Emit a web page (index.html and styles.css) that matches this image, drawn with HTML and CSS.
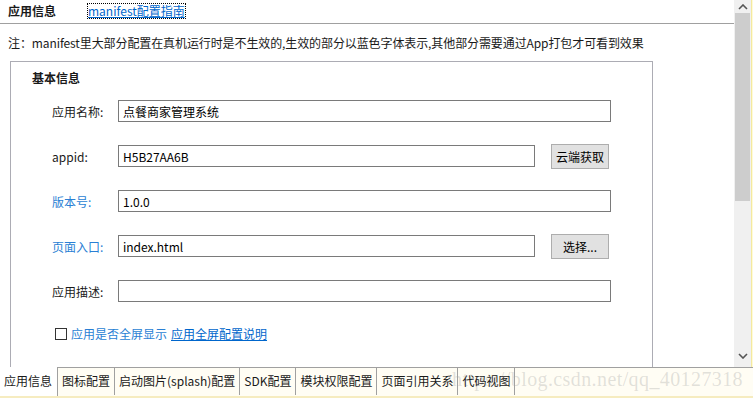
FILE: index.html
```html
<!DOCTYPE html>
<html lang="zh-CN">
<head>
  <meta charset="UTF-8" />
  <title>manifest.json</title>
  <link rel="stylesheet" href="styles.css">
</head>
<body>
  <div class="window">
    <div class="main">
      <div class="content">
        <header class="top">
          <span class="top-title">应用信息</span>
          <a class="guide" href="#">manifest配置指南</a>
        </header>

        <p class="note">注：manifest里大部分配置在真机运行时是不生效的,生效的部分以蓝色字体表示,其他部分需要通过App打包才可看到效果</p>

        <fieldset class="group">
          <div class="group-title">基本信息</div>

          <div class="row">
            <label class="label">应用名称:</label>
            <input class="field" type="text" value="点餐商家管理系统">
          </div>

          <div class="row">
            <label class="label">appid:</label>
            <input class="field short" type="text" value="H5B27AA6B">
            <button class="btn">云端获取</button>
          </div>

          <div class="row">
            <label class="label blue">版本号:</label>
            <input class="field" type="text" value="1.0.0">
          </div>

          <div class="row">
            <label class="label blue">页面入口:</label>
            <input class="field short" type="text" value="index.html">
            <button class="btn">选择...</button>
          </div>

          <div class="row">
            <label class="label">应用描述:</label>
            <input class="field" type="text" value="">
          </div>

          <div class="check-row">
            <span class="box"></span>
            <span class="blue">应用是否全屏显示</span>
            <a href="#" class="link">应用全屏配置说明</a>
          </div>
        </fieldset>
      </div>

      <div class="scrollbar">
        <div class="arrow up">
          <svg width="10" height="6" viewBox="0 0 10 6"><path d="M1 5 L5 1 L9 5" fill="none" stroke="#555" stroke-width="1.6"/></svg>
        </div>
        <div class="thumb"></div>
        <div class="track"></div>
        <div class="arrow down">
          <svg width="10" height="6" viewBox="0 0 10 6"><path d="M1 1 L5 5 L9 1" fill="none" stroke="#555" stroke-width="1.6"/></svg>
        </div>
      </div>
      <div class="edge"></div>
    </div>

    <div class="tabs">
      <span class="watermark">https://blog.csdn.net/qq_40127318</span>
      <span class="tab active">应用信息</span>
      <span class="tab">图标配置</span>
      <span class="tab">启动图片(splash)配置</span>
      <span class="tab">SDK配置</span>
      <span class="tab">模块权限配置</span>
      <span class="tab">页面引用关系</span>
      <span class="tab">代码视图</span>
    </div>
  </div>
</body>
</html>
```

FILE: styles.css
```css
* {
  box-sizing: border-box;
}

body {
  margin: 0;
  width: 753px;
  height: 398px;
  overflow: hidden;
  background: #ffffff;
  font-family: "Noto Sans CJK SC", "Noto Sans", sans-serif;
  font-size: 12px;
  color: #1a1a1a;
}

.window {
  display: flex;
  flex-direction: column;
  height: 398px;
}

.main {
  display: flex;
  height: 367px;
}

.content {
  width: 734px;
  overflow: hidden;
}

.top {
  display: flex;
  align-items: center;
  height: 24px;
  padding: 0 0 2px 8px;
  border-bottom: 1px solid #a0a0a0;
}

.top-title {
  font-weight: bold;
  width: 80px;
}

.guide {
  color: #0066cc;
  outline: 1px dotted #000;
  line-height: 14px;
}

.note {
  margin: 9px 0 0 8px;
  height: 20px;
  line-height: 20px;
  white-space: nowrap;
  letter-spacing: -0.1px;
}

.group {
  margin: 8px 0 0 10px;
  width: 643px;
  height: 320px;
  border: 1px solid #acacb4;
  padding: 6px 0 0 21px;
}

.group-title {
  font-weight: bold;
  line-height: 20px;
  margin-bottom: 12px;
}

.row {
  display: flex;
  align-items: center;
  height: 22px;
  margin-bottom: 23px;
}

.label {
  width: 86px;
  padding-left: 20px;
  flex: none;
  white-space: nowrap;
}

.field {
  width: 493px;
  height: 22px;
  border: 1px solid #7a7a7a;
  padding: 0 4px;
  font: inherit;
  color: #000;
}

.field.short {
  width: 417px;
}

.btn {
  margin-left: 16px;
  width: 58px;
  height: 25px;
  background: #e1e1e1;
  border: 1px solid #adadad;
  font: inherit;
  color: #000;
  padding: 0;
}

.blue {
  color: #2a7fd4;
}

.check-row {
  display: flex;
  align-items: center;
  gap: 4px;
  padding-left: 23px;
  margin-top: 10px;
}

.box {
  width: 12px;
  height: 12px;
  border: 1px solid #333;
  background: #fff;
}

.link {
  color: #0066cc;
}

.scrollbar {
  width: 17px;
  display: flex;
  flex-direction: column;
  background: #f0f0f0;
}

.arrow {
  height: 13px;
  display: flex;
  align-items: center;
  justify-content: center;
}

.thumb {
  height: 188px;
  margin: 0 1px;
  background: #cdcdcd;
}

.track {
  flex: 1;
}

.arrow.down {
  height: 22px;
}

.edge {
  width: 2px;
  background: #fffbd8;
  border-left: 1px solid #f4e9a0;
}

.tabs {
  position: relative;
  display: flex;
  height: 31px;
  background: #fffdf4;
  border-top: 1px solid #a0a0a0;
  border-bottom: 2px solid #f6ecc0;
  font-size: 12px;
}

.tab {
  position: relative;
  padding: 0 4px;
  height: 27px;
  line-height: 25px;
  border-right: 1px solid #a0a0a0;
  white-space: nowrap;
}

.tab:nth-child(2) {
  padding-right: 3px;
}

.tab.active {
  background: #ffffff;
  margin-top: -1px;
  height: 29px;
  line-height: 27px;
  padding: 0 5px 0 4px;
}

.watermark {
  position: absolute;
  right: 10px;
  top: 0;
  font-family: "Liberation Serif", "DejaVu Serif", serif;
  font-size: 20px;
  letter-spacing: 0.4px;
  color: rgba(150, 150, 150, 0.28);
  pointer-events: none;
}
```
